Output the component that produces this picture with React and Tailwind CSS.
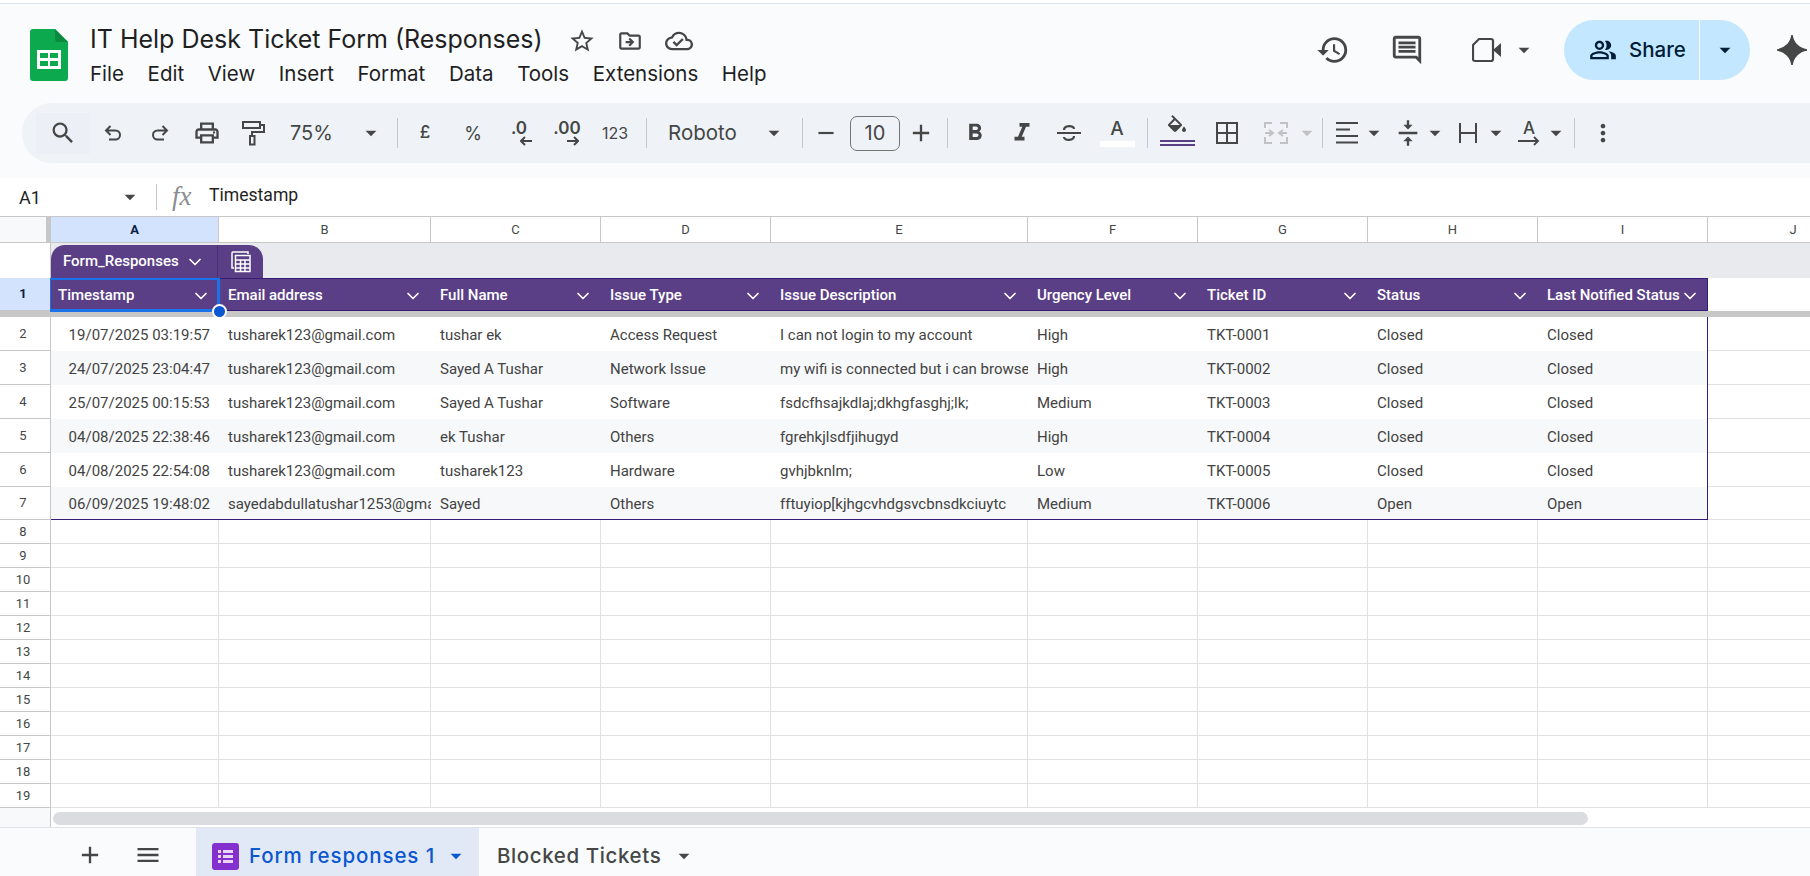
import React from 'react';
import {
  MdSearch, MdOutlineLocalPrintshop, MdArrowDropDown, MdRemove, MdAdd,
  MdFormatBold, MdFormatItalic, MdVerticalAlignCenter, MdMoreVert, MdHistory, MdOutlineComment,
  MdOutlinePeopleAlt, MdStarBorder, MdOutlineDriveFileMove, MdOutlineCloudDone, MdMenu,
} from 'react-icons/md';
import { ChevronDown } from 'lucide-react';

const cols = ['w-[168px]', 'w-[212px]', 'w-[170px]', 'w-[170px]', 'w-[257px]', 'w-[170px]', 'w-[170px]', 'w-[170px]', 'w-[170px]'];
const letters = ['A', 'B', 'C', 'D', 'E', 'F', 'G', 'H', 'I'];
const headers = ['Timestamp', 'Email address', 'Full Name', 'Issue Type', 'Issue Description', 'Urgency Level', 'Ticket ID', 'Status', 'Last Notified Status'];

const rows = [
  { n: 2, h: 'h-[34px]', c: ['19/07/2025 03:19:57', 'tusharek123@gmail.com', 'tushar ek', 'Access Request', 'I can not login to my account', 'High', 'TKT-0001', 'Closed', 'Closed'] },
  { n: 3, h: 'h-[34px]', c: ['24/07/2025 23:04:47', 'tusharek123@gmail.com', 'Sayed A Tushar', 'Network Issue', 'my wifi is connected but i can browse the internet', 'High', 'TKT-0002', 'Closed', 'Closed'] },
  { n: 4, h: 'h-[34px]', c: ['25/07/2025 00:15:53', 'tusharek123@gmail.com', 'Sayed A Tushar', 'Software', 'fsdcfhsajkdlaj;dkhgfasghj;lk;', 'Medium', 'TKT-0003', 'Closed', 'Closed'] },
  { n: 5, h: 'h-[34px]', c: ['04/08/2025 22:38:46', 'tusharek123@gmail.com', 'ek Tushar', 'Others', 'fgrehkjlsdfjihugyd', 'High', 'TKT-0004', 'Closed', 'Closed'] },
  { n: 6, h: 'h-[34px]', c: ['04/08/2025 22:54:08', 'tusharek123@gmail.com', 'tusharek123', 'Hardware', 'gvhjbknlm;', 'Low', 'TKT-0005', 'Closed', 'Closed'] },
  { n: 7, h: 'h-[33px]', c: ['06/09/2025 19:48:02', 'sayedabdullatushar1253@gmail.com', 'Sayed', 'Others', 'fftuyiop[kjhgcvhdgsvcbnsdkciuytc', 'Medium', 'TKT-0006', 'Open', 'Open'] },
];

const emptyRows = [8, 9, 10, 11, 12, 13, 14, 15, 16, 17, 18, 19];
const menu = ['File', 'Edit', 'View', 'Insert', 'Format', 'Data', 'Tools', 'Extensions', 'Help'];

// toolbar slot, width and offset come from className
function Slot({ className = '', children }) {
  return <div className={`flex items-center justify-center shrink-0 h-full text-[#444746] ${className}`}>{children}</div>;
}

function Sep({ className = '' }) {
  return (
    <div className={`flex items-center justify-center shrink-0 h-full ${className}`}>
      <div className="w-px h-[30px] bg-[#c7c7c7]" />
    </div>
  );
}

function Caret({ className = 'text-[#444746]', size = 26 }) {
  return <MdArrowDropDown size={size} className={`shrink-0 ${className}`} />;
}

function SheetsLogo() {
  return (
    <svg width="38" height="52" viewBox="0 0 38 52" className="shrink-0">
      <path d="M3 0H25L38 13V49a3 3 0 0 1-3 3H3a3 3 0 0 1-3-3V3a3 3 0 0 1 3-3z" fill="#0da94f" />
      <path d="M25 0L38 13H28a3 3 0 0 1-3-3z" fill="#0a8a3e" />
      <path d="M7 21H31V40H7z" fill="#fff" />
      <path d="M10 24H18V29H10zM20 24H28V29H20zM10 32H18V37H10zM20 32H28V37H20z" fill="#0da94f" />
    </svg>
  );
}

function Undo({ flip }) {
  return (
    <svg width="24" height="24" viewBox="0 0 24 24" fill="none" stroke="#444746" strokeWidth="2" className={flip ? '-scale-x-100' : ''}>
      <path d="M9.5 5L5 9.5L9.5 14M5 9.5H14.5a4.5 4.5 0 0 1 0 9H8" />
    </svg>
  );
}

function Roller() {
  return (
    <svg width="26" height="26" viewBox="0 0 26 26" fill="none" stroke="#444746" strokeWidth="2">
      <path d="M3 2H20V8H3zM20 5H24V12H12V16M10 16H14.5V24.5H10z" />
    </svg>
  );
}

function SmallArrow({ left }) {
  return (
    <svg width="12" height="10" viewBox="0 0 12 10" fill="none" stroke="#444746" strokeWidth="2" className={left ? '' : '-scale-x-100'}>
      <path d="M5 1L1 5L5 9M1 5H12" />
    </svg>
  );
}

function Strike() {
  return (
    <svg width="26" height="26" viewBox="0 0 26 26" fill="none" stroke="#444746" strokeWidth="2.2">
      <path d="M1 13H25M8 10c0-5 10-5 10-1M18 16c0 5-10 5-10 1" />
    </svg>
  );
}

function Fill() {
  return (
    <svg width="24" height="24" viewBox="0 0 24 24" fill="#444746">
      <path d="M16.56 8.94L7.62 0 6.21 1.41l2.38 2.38-5.15 5.15c-.59.59-.59 1.54 0 2.12l5.5 5.5c.29.29.68.44 1.06.44s.77-.15 1.06-.44l5.5-5.5c.59-.58.59-1.53 0-2.12zM5.21 10L10 5.21 14.79 10H5.21zM19 11.5s-2 2.17-2 3.5c0 1.1.9 2 2 2s2-.9 2-2c0-1.33-2-3.5-2-3.5z" />
    </svg>
  );
}

function Borders() {
  return (
    <svg width="22" height="22" viewBox="0 0 22 22" fill="none" stroke="#444746" strokeWidth="2">
      <path d="M1 1H21V21H1zM11 1V21M1 11H21" />
    </svg>
  );
}

function Merge() {
  return (
    <svg width="24" height="22" viewBox="0 0 24 22" fill="none" stroke="#c0c2c4" strokeWidth="2">
      <path d="M1 6V1H8M16 1H23V6M1 15V21H8M16 21H23V15M1 11H8M5 8L9 11L5 14M23 11H15M19 8L15 11L19 14" />
    </svg>
  );
}

function AlignLines() {
  return (
    <svg width="22" height="22" viewBox="0 0 22 22" fill="#444746">
      <path d="M0 0H22V2H0zM0 6.5H14V8.5H0zM0 13H22V15H0zM0 19.5H22V21.5H0z" />
    </svg>
  );
}

function Wrap() {
  return (
    <svg width="20" height="22" viewBox="0 0 20 22" fill="none" stroke="#444746" strokeWidth="2">
      <path d="M2 1V21M18 1V21M2 11H18" />
    </svg>
  );
}

function Rotate() {
  return (
    <div className="flex flex-col items-center w-[22px]">
      <span className="text-[17px] leading-[16px] font-medium text-[#444746]">A</span>
      <svg width="22" height="10" viewBox="0 0 22 10" fill="none" stroke="#444746" strokeWidth="1.8">
        <path d="M0 5H20M16 1L20 5L16 9" />
      </svg>
    </div>
  );
}

function Meet() {
  return (
    <svg width="30" height="26" viewBox="0 0 30 26" fill="none">
      <path d="M7 2H19a2 2 0 0 1 2 2V22a2 2 0 0 1-2 2H3a2 2 0 0 1-2-2V8z" stroke="#444746" strokeWidth="2.2" />
      <path d="M21 13L29 6V20z" fill="#444746" />
    </svg>
  );
}

function Spark() {
  return (
    <svg width="30" height="30" viewBox="0 0 30 30">
      <path d="M15 0C16 8 22 14 30 15C22 16 16 22 15 30C14 22 8 16 0 15C8 14 14 8 15 0z" fill="#444746" stroke="#444746" strokeWidth="1.5" />
    </svg>
  );
}

function TableCalc() {
  return (
    <svg width="20" height="22" viewBox="0 0 20 22" fill="none" stroke="#fff" strokeWidth="1.5">
      <path d="M17 3V1H2a1 1 0 0 0-1 1V17H3" />
      <path d="M4.5 4.5H19V20.5H4.5zM4.5 9H19M4.5 13H19M4.5 17H19M9.5 9V20.5M14 9V20.5" />
    </svg>
  );
}

function FormsIcon() {
  return (
    <svg width="27" height="27" viewBox="0 0 27 27" className="shrink-0">
      <rect width="27" height="27" rx="3" fill="#8430ce" />
      <path d="M6 7H9V10H6zM11 7H21V10H11zM6 12H9V15H6zM11 12H21V15H11zM6 17H9V20H6zM11 17H21V20H11z" fill="#e8d5f7" />
    </svg>
  );
}

function RowHead({ n, h, active }) {
  return (
    <div className={`${h} w-[51px] shrink-0 pr-[4px] flex items-center justify-center text-[13px] border-r border-b border-[#c7c7c7] ${active ? 'bg-[#d3e3fd] text-[#0b1f45] font-bold' : 'bg-white text-[#444746]'}`}>
      {n}
    </div>
  );
}

export default function App() {
  return (
    <div className="w-[1810px] h-[876px] overflow-hidden flex flex-col bg-white [font-family:Roboto,sans-serif]">
      {/* Top bar */}
      <div className="h-[175px] shrink-0 bg-[#f9fbfd] border-t border-[#dbe6ee] mt-[3px] flex flex-col [font-family:Inter,sans-serif]">
        <div className="h-[99px] flex justify-between">
          <div className="flex pl-[30px] pt-[25px]">
            <SheetsLogo />
            <div className="ml-[22px] -mt-[9px]">
              <div className="flex items-center h-[40px]">
                <span className="text-[25px] text-[#1f1f1f]">IT Help Desk Ticket Form (Responses)</span>
                <div className="ml-[25px] mt-[1px] flex items-center gap-[21.5px] text-[#444746]">
                  <MdStarBorder size={28} />
                  <MdOutlineDriveFileMove size={26} />
                  <MdOutlineCloudDone size={28} />
                </div>
              </div>
              <div className="flex gap-[23.6px] text-[20.5px] text-[#1f1f1f] -mt-[1px]">
                {menu.map(m => <span key={m}>{m}</span>)}
              </div>
            </div>
          </div>
          <div className="flex items-center h-[60px] mt-[16px] text-[#444746]">
            <div className="w-[74px] flex justify-center"><MdHistory size={34} /></div>
            <div className="w-[74px] flex justify-center"><MdOutlineComment size={34} /></div>
            <div className="w-[72px] pl-[14px] flex justify-center"><Meet /></div>
            <div className="w-[16px] flex justify-center"><Caret /></div>
            <div className="ml-[32px] w-[186px] h-[60px] rounded-[30px] bg-[#c2e7ff] flex items-center text-[#001d35]">
              <div className="w-[136px] h-full flex items-center pl-[25px] border-r border-white">
                <MdOutlinePeopleAlt size={28} />
                <span className="ml-[12px] text-[20.5px] font-medium">Share</span>
              </div>
              <div className="flex-1 flex justify-center"><Caret className="text-[#001d35]" /></div>
            </div>
            <div className="ml-[24px] w-[36px] flex justify-center"><Spark /></div>
          </div>
        </div>
        <div className="ml-[22px] h-[60px] bg-[#eff3f8] rounded-l-[30px] flex pl-[14px] py-0 items-center text-[#444746]">
          <Slot className="w-[54px]">
            <div className="w-[56px] h-[41px] flex items-center justify-center bg-[#ecf0f6]"><MdSearch size={28} /></div>
          </Slot>
          <Slot className="w-[46px]"><Undo /></Slot>
          <Slot className="w-[48px]"><Undo flip /></Slot>
          <Slot className="w-[46px]"><MdOutlineLocalPrintshop size={28} /></Slot>
          <Slot className="w-[46px]"><Roller /></Slot>
          <Slot className="w-[79px] pl-[14px] justify-start! text-[20px]">75%</Slot>
          <Slot className="w-[32px]"><Caret /></Slot>
          <Sep className="w-[20px]" />
          <Slot className="w-[36px] text-[17px] font-medium">£</Slot>
          <Slot className="w-[60px] text-[18px]">%</Slot>
          <Slot className="w-[32px]">
            <div className="flex flex-col items-center">
              <span className="text-[17px] leading-[15px] font-semibold">.0</span>
              <div className="ml-[14px]"><SmallArrow left /></div>
            </div>
          </Slot>
          <Slot className="w-[64px]">
            <div className="flex flex-col items-center">
              <span className="text-[17px] leading-[15px] font-semibold">.00</span>
              <div className="ml-[12px]"><SmallArrow /></div>
            </div>
          </Slot>
          <Slot className="w-[32px] text-[16px]">123</Slot>
          <Sep className="w-[30px]" />
          <Slot className="w-[95px] pl-[7px] justify-start! text-[20.5px]">Roboto</Slot>
          <Slot className="w-[36px]"><Caret /></Slot>
          <Sep className="w-[20px]" />
          <Slot className="w-[28px]"><MdRemove size={26} /></Slot>
          <Slot className="w-[60px] pl-[10px]">
            <div className="w-[50px] h-[35px] rounded-[7px] border border-[#747775] flex items-center justify-center text-[20px]">10</div>
          </Slot>
          <Slot className="w-[42px]"><MdAdd size={28} /></Slot>
          <Sep className="w-[10px]" />
          <Slot className="w-[46px]"><MdFormatBold size={28} /></Slot>
          <Slot className="w-[48px]"><MdFormatItalic size={30} /></Slot>
          <Slot className="w-[46px]"><Strike /></Slot>
          <Slot className="w-[50px]">
            <div className="flex flex-col items-center">
              <span className="text-[19px] leading-[20px] font-medium">A</span>
              <div className="mt-[2px] w-[35px] h-[6px] bg-white" />
            </div>
          </Slot>
          <Sep className="w-[10px]" />
          <Slot className="w-[50px]">
            <div className="flex flex-col items-center -mt-[6px]">
              <Fill />
              <div className="mt-[1px] w-[35px] h-[6px] border-y-2 border-[#5b3f86]" />
            </div>
          </Slot>
          <Slot className="w-[50px]"><Borders /></Slot>
          <Slot className="w-[48px]"><Merge /></Slot>
          <Slot className="w-[14px]"><Caret className="text-[#c0c2c4]" /></Slot>
          <Sep className="w-[16px]" />
          <Slot className="w-[34px]"><AlignLines /></Slot>
          <Slot className="w-[20px]"><Caret /></Slot>
          <Slot className="w-[44px] pl-[4px]"><MdVerticalAlignCenter size={28} /></Slot>
          <Slot className="w-[14px]"><Caret /></Slot>
          <Slot className="w-[48px] pl-[4px]"><Wrap /></Slot>
          <Slot className="w-[12px]"><Caret /></Slot>
          <Slot className="w-[46px] pl-[8px]"><Rotate /></Slot>
          <Slot className="w-[16px]"><Caret /></Slot>
          <Sep className="w-[20px]" />
          <Slot className="w-[38px]"><MdMoreVert size={28} /></Slot>
        </div>
      </div>

      {/* Formula bar */}
      <div className="h-[38px] shrink-0 bg-white flex items-center text-[#1f1f1f]">
        <div className="w-[157px] h-[26px] flex items-center justify-between pl-[19px] pr-[13px] border-r border-[#c7c7c7]">
          <span className="text-[18px]">A1</span>
          <Caret className="text-[#444746]" />
        </div>
        <span className="ml-[15px] w-[37px] -mt-[2px] text-[27px] text-[#8a8d91] italic [font-family:'Liberation_Serif',serif]">fx</span>
        <span className="text-[17.6px] -mt-[3px]">Timestamp</span>
      </div>

      {/* Column headers */}
      <div className="h-[27px] shrink-0 flex border-y border-[#c7c7c7] text-[13px] text-[#444746]">
        <div className="w-[51px] shrink-0 bg-[#f8f9fa] border-r-[5px] border-[#c7c7c7]" />
        {letters.map((l, i) => (
          <div key={l} className={`${cols[i]} shrink-0 flex items-center justify-center border-r border-[#c7c7c7] ${i === 0 ? 'bg-[#d3e3fd] font-bold text-[#0b1f45]' : ''}`}>{l}</div>
        ))}
        <div className="w-[170px] shrink-0 flex items-center justify-center">J</div>
      </div>

      {/* Table name band */}
      <div className="h-[35px] shrink-0 flex">
        <div className="w-[51px] shrink-0 bg-white border-r border-[#c7c7c7]" />
        <div className="flex-1 bg-[#e8eaed] flex items-end">
          <div className="flex w-[212px] h-[33px] bg-[#5b3f86] rounded-t-[14px] text-white">
            <div className="w-[167px] flex items-center pl-[12px] border-r border-[#4a3172]">
              <span className="text-[15px] font-medium">Form_Responses</span>
              <ChevronDown size={20} className="ml-[6px]" />
            </div>
            <div className="flex-1 flex items-center justify-center"><TableCalc /></div>
          </div>
        </div>
      </div>

      {/* Table header row */}
      <div className="h-[33px] shrink-0 flex relative">
        <RowHead n={1} h="h-[33px]" active />
        {headers.map((t, i) => (
          <div key={t} className={`${cols[i]} shrink-0 h-full bg-[#5b3f86] border-y border-[#351c75] flex items-center justify-between pr-[8px] pt-[2px] text-[15px] font-medium text-white whitespace-nowrap ${i === 0 ? 'pl-[7px]' : 'pl-[9px]'} ${i === 8 ? 'border-r' : ''}`}>
            <span>{t}</span>
            <ChevronDown size={20} className="shrink-0" />
          </div>
        ))}
        <div className="flex-1 bg-white" />
        <div className="absolute left-[50px] top-0 w-[170px] h-[34px] border-[3px] border-l-[1px] border-t-[2px] border-[#1a73e8] pointer-events-none" />
        <div className="absolute left-[212px] top-[26px] w-[15px] h-[15px] rounded-full bg-[#0b57d0] border-2 border-white" />
      </div>

      {/* Frozen row bar */}
      <div className="h-[6px] shrink-0 bg-[#c7c7c7]" />

      {/* Data rows */}
      {rows.map((r, ri) => (
        <div key={r.n} className={`${r.h} shrink-0 flex`}>
          <RowHead n={r.n} h={r.h} />
          {r.c.map((v, i) => (
            <div
              key={i}
              className={`${cols[i]} shrink-0 h-full flex items-center overflow-hidden whitespace-nowrap pt-[2px] text-[15px] text-[#434343] ${i === 0 ? 'justify-end pr-[9px]' : 'pl-[9px]'} ${ri % 2 ? 'bg-[#f6f8f9]' : 'bg-white'} ${i === 8 ? 'border-r border-[#351c75]' : ''} ${r.n === 7 ? 'border-b border-[#351c75]' : ''}`}
            >
              {v}
            </div>
          ))}
          <div className="flex-1 border-b border-[#e1e1e1]" />
        </div>
      ))}

      {/* Empty rows */}
      {emptyRows.map(n => (
        <div key={n} className="h-[24px] shrink-0 flex">
          <RowHead n={n} h="h-[24px]" />
          {cols.map((c, i) => (
            <div key={i} className={`${c} shrink-0 border-r border-b border-[#e1e1e1]`} />
          ))}
          <div className="flex-1 border-b border-[#e1e1e1]" />
        </div>
      ))}

      {/* Scrollbar */}
      <div className="h-[19px] shrink-0 flex">
        <div className="w-[51px] shrink-0 bg-[#f8f9fa] border-r border-[#c7c7c7]" />
        <div className="flex-1 pt-[4px] pl-[2px]">
          <div className="w-[1535px] h-[13px] rounded-full bg-[#dadce0]" />
        </div>
      </div>

      {/* Sheet tabs */}
      <div className="flex-1 bg-[#f9fbfd] border-t border-[#e1e3e6] flex [font-family:Inter,sans-serif] text-[#444746]">
        <div className="w-[117px] flex items-center justify-end pr-[13px] pt-[6px]"><MdAdd size={28} /></div>
        <div className="w-[79px] flex items-center pl-[17px] pt-[6px]"><MdMenu size={28} /></div>
        <div className="w-[283px] bg-[#e1e9f7] flex items-center pl-[16px] pt-[8px] text-[#0b57d0]">
          <FormsIcon />
          <span className="ml-[10px] text-[20.5px] font-medium tracking-[0.9px]">Form responses 1</span>
          <Caret className="ml-[8px] text-[#0b57d0]" />
        </div>
        <div className="flex items-center pl-[18px] pt-[8px]">
          <span className="text-[20.5px] font-medium tracking-[0.6px]">Blocked Tickets</span>
          <Caret className="ml-[10px]" />
        </div>
      </div>
    </div>
  );
}
